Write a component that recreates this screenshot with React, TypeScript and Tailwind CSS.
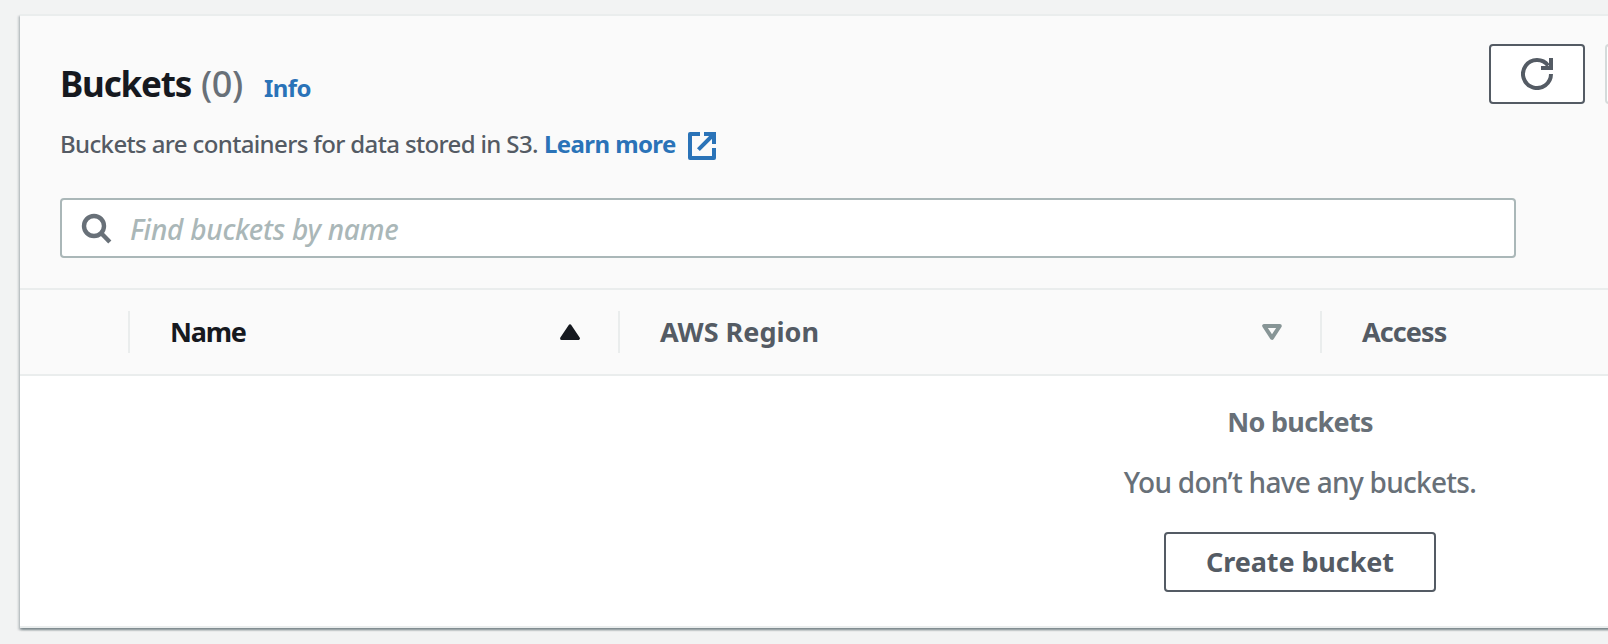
function RefreshIcon() {
  return (
    <svg className="size-8" viewBox="0 0 16 16" fill="none" stroke="currentColor" strokeWidth="2">
      <path d="M10 5h5V0" />
      <path d="M15 8a7 7 0 1 1-1.4-4.2" />
    </svg>
  );
}

function ExternalIcon() {
  return (
    <svg className="mt-0.5 size-8 shrink-0" viewBox="0 0 16 16" fill="none" stroke="currentColor" strokeWidth="2">
      <path d="M7 2H2v12h12V9" strokeLinejoin="round" />
      <path d="M9 2h5v5M6.2 9.8 14 2" />
    </svg>
  );
}

function SearchIcon() {
  return (
    <svg className="size-8 shrink-0" viewBox="0 0 16 16" fill="none" stroke="currentColor" strokeWidth="2.2">
      <circle cx="7" cy="7" r="5" />
      <path d="m10.4 10.4 4.5 4.6" />
    </svg>
  );
}

function SortAscending() {
  return (
    <svg className="h-4 w-5" viewBox="0 0 20 16" fill="currentColor" stroke="currentColor" strokeWidth="3" strokeLinejoin="round">
      <path d="M10 1.8 18.4 14.4H1.6z" />
    </svg>
  );
}

function SortNone() {
  return (
    <svg className="h-4 w-5" viewBox="0 0 20 16" fill="none" stroke="currentColor" strokeWidth="4" strokeLinejoin="round">
      <path d="M2.2 2h15.6L10 13.8z" />
    </svg>
  );
}

function Divider() {
  return <div className="h-[42px] w-0.5 shrink-0 bg-[#eaeded]" />;
}

export default function App() {
  return (
    <div className="h-[644px] w-full overflow-hidden bg-[#f2f3f3] pt-3.5 pl-5 font-['Noto_Sans',sans-serif] font-medium whitespace-nowrap text-[#545b64]">
      <section className="w-[2560px] border-y-2 border-[#eaeded] bg-white shadow-[0_2px_2px_0_rgba(0,28,36,0.3),2px_2px_2px_0_rgba(0,28,36,0.15),-2px_2px_2px_0_rgba(0,28,36,0.15)]">
        <header className="h-[274px] border-b-2 border-[#eaeded] bg-[#fafafa] pt-7 pl-10">
          <div className="flex">
            <div className="w-[1429px] pt-[18px]">
              <h2 className="flex h-11 items-baseline text-[35px] leading-[44px]">
                <span className="w-[141px] font-bold tracking-[-1.2px] text-[#16191f]">Buckets</span>
                <span className="w-[63px] text-[36px] tracking-[-0.4px] text-[#687078]">(0)</span>
                <a className="text-[24px] font-bold tracking-[-0.6px] text-[#2a73b8]">Info</a>
              </h2>
              <p className="mt-[22px] flex h-8 text-[24px] leading-8">
                <span className="w-[484px] tracking-[-0.64px]">Buckets are containers for data stored in S3.</span>
                <a className="flex text-[#2a73b8]">
                  <span className="w-[142px] font-bold tracking-[-0.59px]">Learn more</span>
                  <ExternalIcon />
                </a>
              </p>
            </div>
            <button className="flex h-[60px] w-24 items-center justify-center rounded-sm border-2 border-[#545b64] bg-white">
              <RefreshIcon />
            </button>
            <div className="ml-5 h-[60px] w-40 rounded-sm border-2 border-[#d5dbdb] bg-white" />
          </div>
          <div className="mt-[38px] flex h-[60px] w-[1456px] items-center rounded-sm border-2 border-[#aab7b8] bg-white pl-[18px] text-[#687078]">
            <SearchIcon />
            <span className="ml-[18px] pt-0.5 text-[28px] leading-10 tracking-[-0.25px] text-[#aab7b8] italic">Find buckets by name</span>
          </div>
        </header>

        <div className="flex h-[86px] items-center border-b-2 border-[#eaeded] bg-[#fafafa] pl-[108px] text-[27px] font-bold">
          <Divider />
          <div className="flex w-[488px] items-center justify-between pr-[38px] pl-10 text-[#16191f]">
            <span className="tracking-[-1.2px]">Name</span>
            <SortAscending />
          </div>
          <Divider />
          <div className="flex w-[700px] items-center justify-between pr-[38px] pl-10">
            <span className="tracking-[0px]">AWS Region</span>
            <span className="text-[#879596]"><SortNone /></span>
          </div>
          <Divider />
          <span className="pl-10 tracking-[-0.9px]">Access</span>
        </div>

        <div className="flex h-[250px] flex-col items-center pt-[26px] text-[#687078]">
          <p className="text-[27px] leading-10 font-bold tracking-[-0.7px]">No buckets</p>
          <p className="mt-5 text-[28px] leading-10 tracking-[-0.71px]">You don’t have any buckets.</p>
          <button className="mt-[30px] flex h-[60px] w-[272px] items-center justify-center rounded-sm border-2 border-[#545b64] bg-white text-[27px] font-bold tracking-[-0.1px] text-[#545b64]">
            Create bucket
          </button>
        </div>
      </section>
    </div>
  );
}
